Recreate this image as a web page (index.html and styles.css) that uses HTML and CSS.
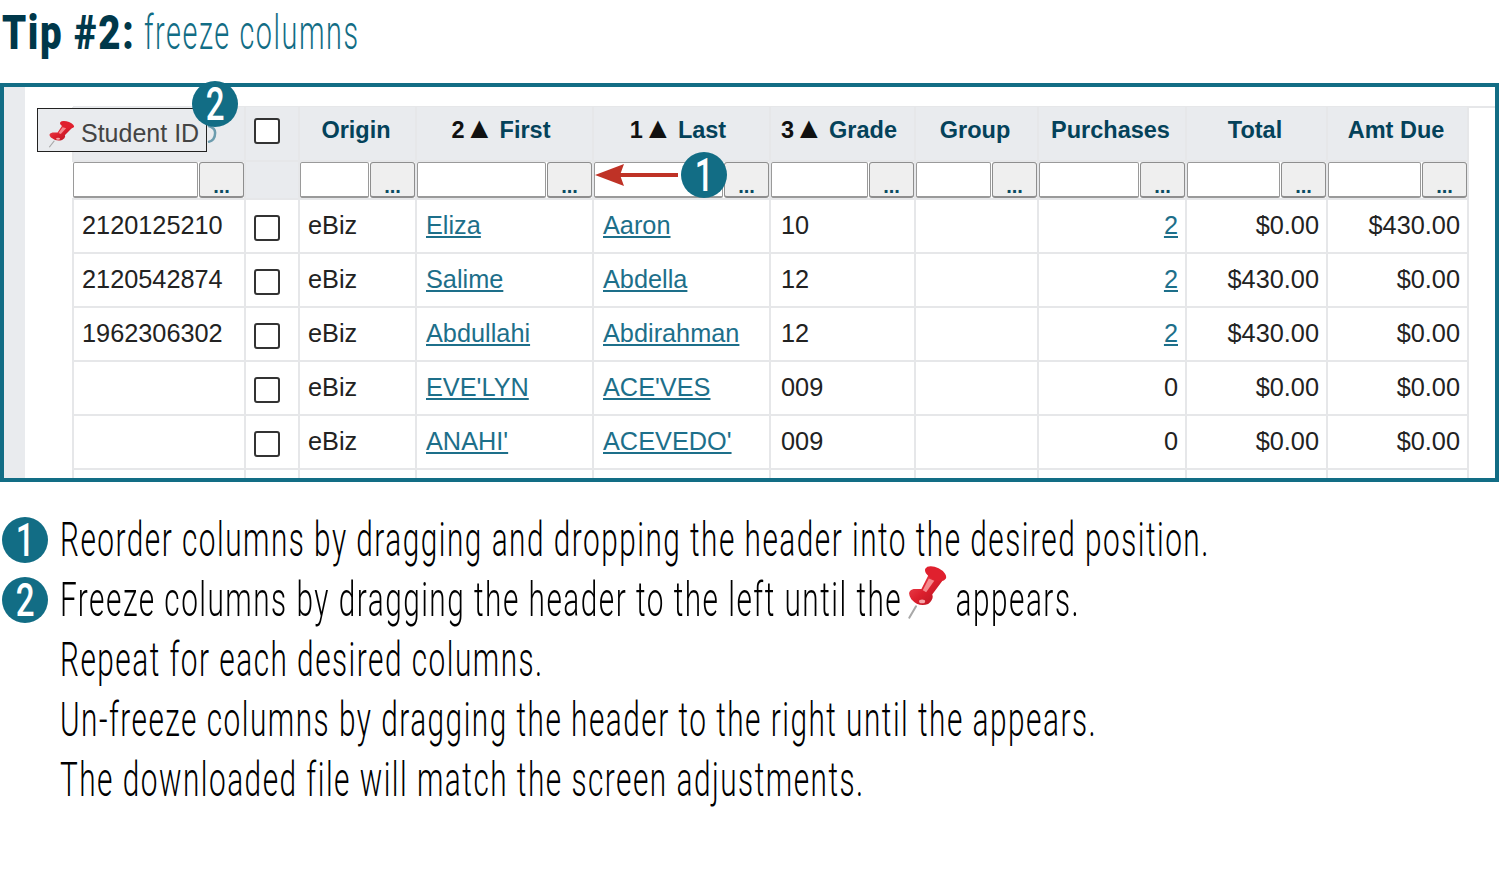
FILE: index.html
```html
<!DOCTYPE html>
<html lang="en">
<head>
<meta charset="utf-8">
<title>Tip #2: freeze columns</title>
<link rel="stylesheet" href="styles.css">
</head>
<body>
<svg class="defs" width="0" height="0">
  <defs>
    <linearGradient id="pinRed" x1="0" y1="0" x2="1" y2="1">
      <stop offset="0" stop-color="#f0505a"/>
      <stop offset=".5" stop-color="#dc1f2d"/>
      <stop offset="1" stop-color="#b01420"/>
    </linearGradient>
    <symbol id="pin" viewBox="85 40 125 175" preserveAspectRatio="none">
      <path d="M112 172 L92 208" stroke="#a8a8a8" stroke-width="6" stroke-linecap="round" fill="none"/>
      <path d="M150 72 L192 90 L160 135 Q166 150 148 165 Q120 176 98 150 Q82 125 105 118 Q120 118 128 118 Z" fill="url(#pinRed)"/>
      <ellipse cx="170" cy="70" rx="34" ry="19" transform="rotate(28 170 70)" fill="#e0202e"/>
      <path d="M150 85 L166 92 L142 128 L132 122 Z" fill="#f58a8e"/>
      <ellipse cx="130" cy="157" rx="9" ry="6" fill="#f7a5a8"/>
    </symbol>
  </defs>
</svg>

<h1 class="title"><span class="squeeze title-bold">Tip #2:</span><span class="squeeze title-light">freeze columns</span></h1>

<section class="frame">
  <div class="strip"></div>
  <div class="main">
    <table class="grid">
      <colgroup>
        <col class="c-id"><col class="c-chk"><col class="c-origin"><col class="c-first"><col class="c-last"><col class="c-grade"><col class="c-group"><col class="c-purch"><col class="c-total"><col class="c-due">
      </colgroup>
      <thead>
        <tr class="head">
          <th></th>
          <th class="chk"><span class="box"></span></th>
          <th>Origin</th>
          <th class="sorted"><i>2</i><b class="tri">▲</b>First</th>
          <th class="sorted"><i>1</i><b class="tri">▲</b>Last</th>
          <th class="sorted"><i>3</i><b class="tri">▲</b>Grade</th>
          <th>Group</th>
          <th>Purchases</th>
          <th>Total</th>
          <th>Amt Due</th>
        </tr>
        <tr class="filters">
          <td><div class="filter"><input type="text"><button type="button">...</button></div></td>
          <td class="blank"></td>
          <td><div class="filter"><input type="text"><button type="button">...</button></div></td>
          <td><div class="filter"><input type="text"><button type="button">...</button></div></td>
          <td><div class="filter"><input type="text"><button type="button">...</button></div></td>
          <td><div class="filter"><input type="text"><button type="button">...</button></div></td>
          <td><div class="filter"><input type="text"><button type="button">...</button></div></td>
          <td><div class="filter"><input type="text"><button type="button">...</button></div></td>
          <td><div class="filter"><input type="text"><button type="button">...</button></div></td>
          <td><div class="filter"><input type="text"><button type="button">...</button></div></td>
        </tr>
      </thead>
      <tbody>
        <tr><td>2120125210</td><td class="chk"><span class="box"></span></td><td>eBiz</td><td class="name"><a href="#">Eliza</a></td><td class="name"><a href="#">Aaron</a></td><td class="grade">10</td><td></td><td class="num"><a href="#">2</a></td><td class="num">$0.00</td><td class="num">$430.00</td></tr>
        <tr><td>2120542874</td><td class="chk"><span class="box"></span></td><td>eBiz</td><td class="name"><a href="#">Salime</a></td><td class="name"><a href="#">Abdella</a></td><td class="grade">12</td><td></td><td class="num"><a href="#">2</a></td><td class="num">$430.00</td><td class="num">$0.00</td></tr>
        <tr><td>1962306302</td><td class="chk"><span class="box"></span></td><td>eBiz</td><td class="name"><a href="#">Abdullahi</a></td><td class="name"><a href="#">Abdirahman</a></td><td class="grade">12</td><td></td><td class="num"><a href="#">2</a></td><td class="num">$430.00</td><td class="num">$0.00</td></tr>
        <tr><td></td><td class="chk"><span class="box"></span></td><td>eBiz</td><td class="name"><a href="#">EVE'LYN</a></td><td class="name"><a href="#">ACE'VES</a></td><td class="grade">009</td><td></td><td class="num">0</td><td class="num">$0.00</td><td class="num">$0.00</td></tr>
        <tr><td></td><td class="chk"><span class="box"></span></td><td>eBiz</td><td class="name"><a href="#">ANAHI'</a></td><td class="name"><a href="#">ACEVEDO'</a></td><td class="grade">009</td><td></td><td class="num">0</td><td class="num">$0.00</td><td class="num">$0.00</td></tr>
        <tr><td></td><td></td><td></td><td></td><td></td><td></td><td></td><td></td><td></td><td></td></tr>
      </tbody>
    </table>
  </div>

  <svg class="ghost-d" width="12" height="18" viewBox="0 0 12 20" preserveAspectRatio="none"><path d="M1 1 Q9 3 8 10 Q8 17 1 19" fill="none" stroke="#6c9cae" stroke-width="2.5"/></svg>
  <div class="drag"><svg class="drag-pin"><use href="#pin"/></svg><span>Student ID</span></div>
  <span class="badge badge-drag"><span class="digit">2</span></span>
  <svg class="arrow" width="85" height="24" viewBox="0 0 85 24"><path d="M84 12 H24" stroke="#bf3226" stroke-width="4" fill="none"/><path d="M1 12 L30 1 L26 12 L30 23 Z" fill="#bf3226"/></svg>
  <span class="badge badge-arrow"><span class="digit">1</span></span>
</section>

<ol class="notes">
  <li class="note"><span class="badge"><span class="digit">1</span></span><span class="squeeze">Reorder columns by dragging and dropping the header into the desired position.</span></li>
  <li class="note"><span class="badge"><span class="digit">2</span></span><span class="squeeze">Freeze columns by dragging the header to the left until the<svg class="note-pin"><use href="#pin"/></svg>appears.</span></li>
  <li class="note note-indent"><span class="squeeze">Repeat for each desired columns.</span></li>
  <li class="note note-indent"><span class="squeeze">Un-freeze columns by dragging the header to the right until the appears.</span></li>
  <li class="note note-indent"><span class="squeeze">The downloaded file will match the screen adjustments.</span></li>
</ol>
</body>
</html>
```
FILE: styles.css
```css
html, body { margin: 0; padding: 0; background: #fff; overflow: hidden; }
body { width: 1499px; height: 879px; font-family: "Liberation Sans", Arial, sans-serif; color: #222; }
.defs { position: absolute; }

.squeeze {
  display: inline-block;
  white-space: nowrap;
  font-family: Roboto, "Liberation Sans", sans-serif;
  font-size: 48px;
  font-weight: 300;
  letter-spacing: 2.42px;
  transform: scaleX(.62);
  transform-origin: left center;
  width: 0;
}

.title { display: flex; margin: 0; height: 83px; padding-left: 2px; box-sizing: border-box; line-height: 66px; font-weight: 400; }
.title-bold { flex: 0 0 142px; min-width: 0; width: 142px; font-weight: 900; color: #00384a; letter-spacing: 2px; transform: scaleX(.8); }
.title-light { font-weight: 300; color: #126d85; letter-spacing: 2.6px; transform: scaleX(.6); }

.frame {
  position: relative;
  display: flex;
  box-sizing: border-box;
  width: 1499px;
  height: 399px;
  border: 4px solid #126d85;
}
.strip { flex: 0 0 21px; background: #e9ebee; }
.main {
  flex: 1;
  min-width: 0;
  padding: 20px 0 0 47px;
  overflow: hidden;
  background: linear-gradient(#e6e7e9, #e6e7e9) 48px 19px / 100% 2px no-repeat;
}

.grid {
  table-layout: fixed;
  width: 1397px;
  border-collapse: separate;
  border-spacing: 0;
  font-size: 25.3px;
}
.c-id { width: 174px; } .c-chk { width: 54px; } .c-origin { width: 117px; } .c-first { width: 177px; }
.c-last { width: 177px; } .c-grade { width: 145px; } .c-group { width: 123px; } .c-purch { width: 148px; }
.c-total { width: 141px; } .c-due { width: 141px; }

.grid th, .grid td { box-sizing: border-box; padding: 0; border-right: 2px solid #e6e7e9; border-bottom: 2px solid #e6e7e9; }
.grid th:first-child, .grid td:first-child { border-left: 2px solid #e6e7e9; }
.grid tbody td { height: 54px; padding: 0 8px 1px 8px; white-space: nowrap; color: #222; }
.grid tbody tr:last-child td { height: 20px; }
.grid td.name { padding-left: 9px; }
.grid td.grade { padding-left: 10px; }
.grid td.num { text-align: right; padding-right: 7px; }
.grid .chk { text-align: left; padding-left: 8px; }
.grid a { color: #1d6f8a; }

.head th {
  height: 55px;
  padding-right: 3px;
  padding-bottom: 6px;
  background: #e9ebee;
  font-size: 23.5px;
  font-weight: 700;
  color: #04425a;
  white-space: nowrap;
  text-align: center;
}
.head th.sorted { padding-right: 7px; }
.head i { font-style: normal; color: #111; }
.tri { display: inline-block; width: 19px; margin: 0 14px 0 2px; overflow: visible; font-size: 30px; line-height: 0; font-weight: 400; color: #111; text-indent: -2px; }

.filters td { height: 38px; background: #fff; }
.filters td:first-child { border-left: 0; padding-left: 1px; }
.filters td.blank { background: #e9ebee; }
.filter { display: flex; height: 36px; }
.filter input {
  flex: 1;
  min-width: 0;
  box-sizing: border-box;
  height: 36px;
  margin: 0;
  padding: 0;
  background: #fff;
  border: 1px solid #9a9a9a;
  border-bottom-width: 2px;
  border-radius: 2px;
}
.filter button {
  flex: 0 0 45px;
  box-sizing: border-box;
  height: 36px;
  margin: 0 0 0 1px;
  padding: 12px 0 0;
  background: #efefef;
  border: 1px solid #8e8e8e;
  border-bottom-width: 2px;
  border-radius: 3px;
  color: #0b4a63;
  font: 700 20px/1 "Liberation Sans", Arial, sans-serif;
}

.box { display: inline-block; box-sizing: border-box; width: 26px; height: 26px; border: 2px solid #333; border-radius: 3px; background: #fff; vertical-align: middle; }
tbody .box { margin-top: 4px; }

.ghost-d { position: absolute; left: 203px; top: 38px; }
.drag {
  position: absolute;
  left: 33px;
  top: 21px;
  display: flex;
  align-items: center;
  box-sizing: border-box;
  width: 170px;
  height: 44px;
  padding: 7px 0 0 10px;
  background: #e9ebee;
  border: 1px solid #222;
  font-size: 25px;
  color: #444;
}
.drag-pin { flex: 0 0 28px; height: 28px; margin: 0 5px 0 0; }

.badge {
  display: flex;
  flex: 0 0 46px;
  align-items: center;
  justify-content: center;
  width: 46px;
  height: 46px;
  border-radius: 50%;
  background: #126d85;
  color: #fff;
}
.digit { display: inline-block; font: 500 46px/1 Roboto, sans-serif; transform: scaleX(.72); }
.badge-drag { position: absolute; left: 188px; top: -6px; }
.badge-arrow { position: absolute; left: 677px; top: 65px; }
.arrow { position: absolute; left: 590px; top: 76px; }

.notes { list-style: none; margin: 27px 0 0; padding: 0; }
.note { display: flex; align-items: center; height: 60px; padding-left: 2px; gap: 12px; color: #000; }
.note .badge { margin-top: 2px; }
.note-indent { padding-left: 60px; }
.note-pin { display: inline-block; width: 68px; height: 56px; margin: -20px 10px -20px 8px; vertical-align: 16px; }
```
